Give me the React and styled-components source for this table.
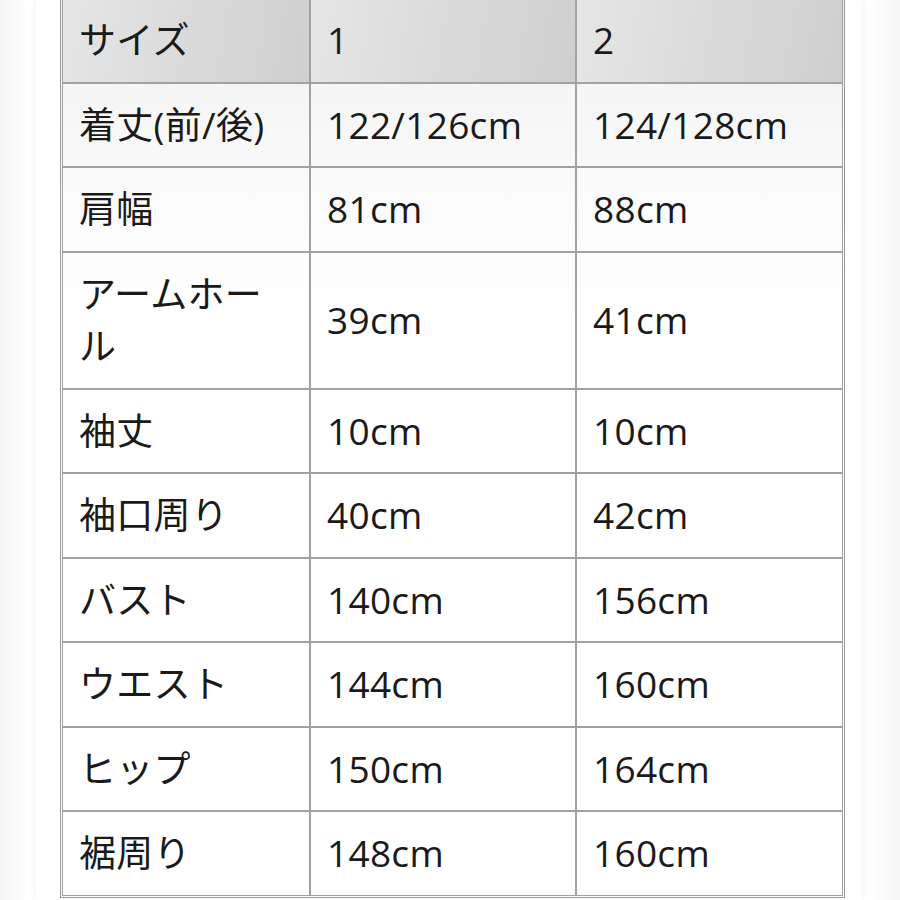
import React from 'react';
import styled, { createGlobalStyle } from 'styled-components';

const GlobalStyle = createGlobalStyle`
  html, body {
    margin: 0;
    padding: 0;
    background: #f4f4f4;
  }
  body {
    font-family: "Open Sans", "Noto Sans CJK JP", sans-serif;
    color: #1a1a1a;
  }
`

const Page = styled.div`
  width: 900px;
  height: 900px;
  overflow: hidden;
  display: flex;
  justify-content: center;
  background: linear-gradient(to right, #f6f6f6 0, #ffffff 30px, #ffffff 870px, #f6f6f6 900px);
`
const Sheet = styled.div`
  width: 826px;
  margin-left: -2px;
  padding: 0 0 0 24px;
  box-sizing: border-box;
  background: #fff;
  box-shadow: 0 0 8px rgba(0, 0, 0, 0.06);
`
const SizeTable = styled.table`
  margin-top: -4px;
  width: 783px;
  table-layout: fixed;
  border-collapse: separate;
  border-spacing: 0;
  border: 1px solid #9a9a9a;
  padding: 1px;
  background: linear-gradient(to bottom, #f0f0f0 0, #fafafa 180px, #ffffff 320px);
`
const Cell = styled.td`
  border: 1px solid #a2a2a2;
  padding: 15px 14px 15px 16px;
  font-size: 37px;
  letter-spacing: 0.3px;
  line-height: 52.5px;
  vertical-align: middle;
  background: ${p => (p.$head ? 'linear-gradient(100deg, #e6e6e6 0%, #dadada 50%, #cfcfcf 100%)' : 'transparent')};
`

const rows = [
  ['着丈(前/後)', '122/126cm', '124/128cm'],
  ['肩幅', '81cm', '88cm'],
  ['アームホール', '39cm', '41cm'],
  ['袖丈', '10cm', '10cm'],
  ['袖口周り', '40cm', '42cm'],
  ['バスト', '140cm', '156cm'],
  ['ウエスト', '144cm', '160cm'],
  ['ヒップ', '150cm', '164cm'],
  ['裾周り', '148cm', '160cm'],
]

const App = () => (
  <Page>
    <GlobalStyle />
    <Sheet>
      <SizeTable>
        <colgroup>
          <col style={{ width: 248 }} />
          <col style={{ width: 266 }} />
          <col style={{ width: 267 }} />
        </colgroup>
        <tbody>
          <tr>
            <Cell $head>サイズ</Cell>
            <Cell $head>1</Cell>
            <Cell $head>2</Cell>
          </tr>
          {rows.map(r => (
            <tr key={r[0]}>
              {r.map((v, i) => (
                <Cell key={i}>{v}</Cell>
              ))}
            </tr>
          ))}
        </tbody>
      </SizeTable>
    </Sheet>
  </Page>
)

export default App
